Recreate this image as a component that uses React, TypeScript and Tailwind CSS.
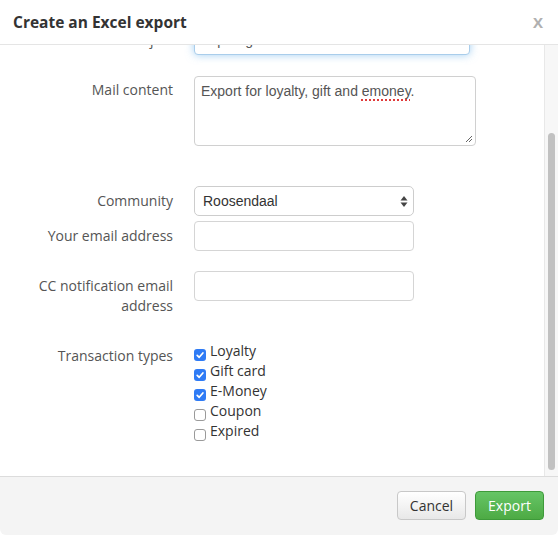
import React from "react";

function Check({ checked, label }: { checked: boolean; label: string }) {
  return (
    <div className="flex items-start h-[20px] leading-[20px]">
      {checked ? (
        <span className="mt-[8px] w-[12px] h-[12px] rounded-[3px] bg-[#2f7bf5] flex items-center justify-center">
          <svg width="12" height="12" viewBox="0 0 12 12">
            <path d="M3.2 6.3 L5.2 8.3 L8.9 4" fill="none" stroke="white" strokeWidth="1.7" strokeLinecap="round" strokeLinejoin="round" />
          </svg>
        </span>
      ) : (
        <span className="mt-[8px] w-[12px] h-[12px] rounded-[3px] border border-[#9a9a9a] bg-white" />
      )}
      <span className="ml-[4px] text-[#333]">{label}</span>
    </div>
  );
}

export default function App() {
  const helv = "font-['Liberation_Sans',Arial,sans-serif]";
  return (
    <div className="w-[558px] h-[553px] bg-white font-['Open_Sans',sans-serif] text-[14px] leading-[20px] text-[#555]">
      <div className="h-[45px] border-b border-[#e5e5e5] flex items-center justify-between pl-[13px] pr-[15px]">
        <h3 className="text-[15.5px] font-bold text-[#333]">Create an Excel export</h3>
        <span className="text-[15px] font-bold text-[#b0b0b0]">X</span>
      </div>
      <div className="flex h-[431px]">
        <div className="flex-1 overflow-hidden">
          <div className="-mt-[20px]">
            {/* Mail subject */}
            <div className="flex">
              <label className="w-[173px] text-right pt-[5px]">Mail subject</label>
              <div className={`ml-[21px] w-[276px] h-[30px] rounded-[4px] border border-[#a9cdeb] shadow-[0_0_8px_rgba(102,175,233,0.6)] bg-white flex items-center pl-[6px] text-[#555] ${helv}`}>
                Export gift card
              </div>
            </div>
            {/* Mail content */}
            <div className="flex mt-[21px]">
              <label className="w-[173px] text-right pt-[4px]">Mail content</label>
              <div className={`relative ml-[21px] w-[282px] h-[70px] rounded-[4px] border border-[#d0d0d0] bg-white pt-[4px] px-[6px] text-[#555] ${helv}`}>
                Export for loyalty, gift and{" "}
                <span className="underline decoration-dotted decoration-[#e03a3a] decoration-2 underline-offset-[3px]">emoney</span>.
                <svg className="absolute right-[2px] bottom-[2px]" width="8" height="8" viewBox="0 0 8 8">
                  <path d="M7 1 L1 7 M7 4 L4 7" stroke="#666" strokeWidth="1" />
                </svg>
              </div>
            </div>
            {/* Community */}
            <div className="flex mt-[40px]">
              <label className="w-[173px] text-right pt-[5px]">Community</label>
              <div className={`ml-[21px] w-[220px] h-[30px] rounded-[5px] border border-[#cdcdcd] bg-white flex items-center justify-between pl-[8px] pr-[5px] text-[#333] ${helv}`}>
                <span>Roosendaal</span>
                <svg width="8" height="13" viewBox="0 0 8 13">
                  <path d="M4 1 L7.5 5.5 L0.5 5.5 Z" fill="#444" />
                  <path d="M4 12 L7.5 7.5 L0.5 7.5 Z" fill="#444" />
                </svg>
              </div>
            </div>
            {/* Email */}
            <div className="flex mt-[5px]">
              <label className="w-[173px] text-right pt-[5px]">Your email address</label>
              <div className="ml-[21px] w-[220px] h-[30px] rounded-[4px] border border-[#d5d5d5] bg-white" />
            </div>
            {/* CC */}
            <div className="flex mt-[20px]">
              <label className="w-[173px] text-right pt-[5px]">CC notification email address</label>
              <div className="ml-[21px] w-[220px] h-[30px] rounded-[4px] border border-[#d5d5d5] bg-white" />
            </div>
            {/* Transaction types */}
            <div className="flex mt-[25px]">
              <label className="w-[173px] text-right pt-[5px]">Transaction types</label>
              <div className="ml-[21px] flex flex-col">
                <Check checked label="Loyalty" />
                <Check checked label="Gift card" />
                <Check checked label="E-Money" />
                <Check checked={false} label="Coupon" />
                <Check checked={false} label="Expired" />
              </div>
            </div>
          </div>
        </div>
        <div className="w-[14px] border-l border-[#e8e8e8] bg-[#f7f7f7] pt-[88px] pl-[3px]">
          <div className="w-[7px] h-[337px] rounded-full bg-[#c1c1c1]" />
        </div>
      </div>
      <div className="h-[59px] border-t border-[#dcdcdc] bg-[#f4f4f4] rounded-b-[6px] flex justify-end items-start pt-[14px] pr-[14px] gap-[9px]">
        <button className="w-[69px] h-[29px] rounded-[4px] border border-[#c8c8c8] bg-linear-to-b from-white to-[#e8e8e8] text-[#333]">
          Cancel
        </button>
        <button className="w-[69px] h-[29px] rounded-[4px] border border-[#3e9a3a] bg-linear-to-b from-[#66c566] to-[#4daa44] text-white">
          Export
        </button>
      </div>
    </div>
  );
}
